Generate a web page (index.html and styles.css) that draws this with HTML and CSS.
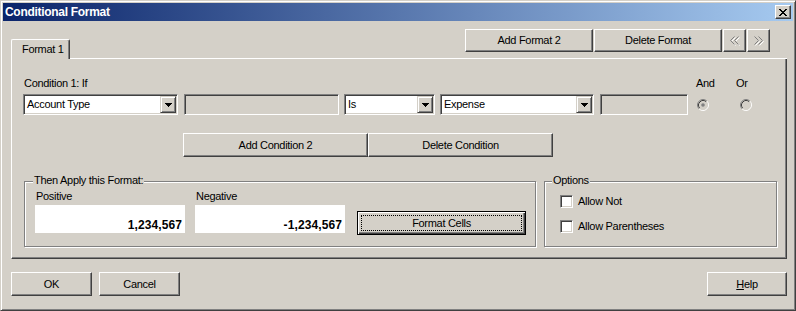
FILE: index.html
```html
<!DOCTYPE html>
<html>
<head>
<meta charset="utf-8">
<title>Conditional Format</title>
<link rel="stylesheet" href="styles.css">
</head>
<body>
<div class="window">
  <div class="titlebar">
    <span class="title">Conditional Format</span>
    <div class="close">
      <svg width="8" height="7" viewBox="0 0 8 7"><path d="M0 0h2v1h1v1h2v-1h1v-1h2v1h-1v1h-1v1h-1v1h1v1h1v1h1v1h-2v-1h-1v-1h-2v1h-1v1h-2v-1h1v-1h1v-1h1v-1h-1v-1h-1v-1h-1z" fill="#000"/></svg>
    </div>
  </div>
  <div class="body">
    <div class="tabhead">
      <div class="tab">Format 1</div>
      <div class="tabline">
        <div class="btn fbtn">Add Format 2</div>
        <div class="btn fbtn">Delete Format</div>
        <div class="btn nav">
          <svg width="10" height="10" viewBox="0 0 10 10"><path d="M4.5 .5L.5 4.5L4.5 8.5M8.5 .5L4.5 4.5L8.5 8.5" transform="translate(1 1)" stroke="#fff" fill="none"/><path d="M4.5 .5L.5 4.5L4.5 8.5M8.5 .5L4.5 4.5L8.5 8.5" stroke="#808080" fill="none"/></svg>
        </div>
        <div class="btn nav">
          <svg width="10" height="10" viewBox="0 0 10 10"><path d="M.5 .5L4.5 4.5L.5 8.5M4.5 .5L8.5 4.5L4.5 8.5" transform="translate(1 1)" stroke="#fff" fill="none"/><path d="M.5 .5L4.5 4.5L.5 8.5M4.5 .5L8.5 4.5L4.5 8.5" stroke="#808080" fill="none"/></svg>
        </div>
      </div>
    </div>
    <div class="panel">
      <div class="labels">
        <span class="l-cond">Condition 1: If</span>
        <span class="l-and">And</span>
        <span class="l-or">Or</span>
      </div>
      <div class="condrow">
        <div class="combo w-acct"><span class="ctext">Account Type</span><span class="carrow"><svg width="7" height="4" viewBox="0 0 7 4"><path d="M0 0H7V1H6V2H5V3H4V4H3V3H2V2H1V1H0Z" fill="#000"/></svg></span></div>
        <div class="textbox w-val1"></div>
        <div class="combo w-is"><span class="ctext">Is</span><span class="carrow"><svg width="7" height="4" viewBox="0 0 7 4"><path d="M0 0H7V1H6V2H5V3H4V4H3V3H2V2H1V1H0Z" fill="#000"/></svg></span></div>
        <div class="combo w-exp"><span class="ctext">Expense</span><span class="carrow"><svg width="7" height="4" viewBox="0 0 7 4"><path d="M0 0H7V1H6V2H5V3H4V4H3V3H2V2H1V1H0Z" fill="#000"/></svg></span></div>
        <div class="textbox w-val2"></div>
        <svg class="radio r-and" width="12" height="12" viewBox="0 0 12 12">
          <circle cx="6" cy="6" r="4.5" fill="#d4d0c8"/>
          <path d="M2.11 9.89A5.5 5.5 0 0 1 9.89 2.11" stroke="#808080" fill="none"/>
          <path d="M9.89 2.11A5.5 5.5 0 0 1 2.11 9.89" stroke="#fff" fill="none"/>
          <path d="M2.82 9.18A4.5 4.5 0 0 1 9.18 2.82" stroke="#404040" fill="none"/>
          <path d="M9.18 2.82A4.5 4.5 0 0 1 2.82 9.18" stroke="#d4d0c8" fill="none"/>
          <circle cx="6" cy="6" r="1.8" fill="#808080"/>
        </svg>
        <svg class="radio r-or" width="12" height="12" viewBox="0 0 12 12">
          <circle cx="6" cy="6" r="4.5" fill="#d4d0c8"/>
          <path d="M2.11 9.89A5.5 5.5 0 0 1 9.89 2.11" stroke="#808080" fill="none"/>
          <path d="M9.89 2.11A5.5 5.5 0 0 1 2.11 9.89" stroke="#fff" fill="none"/>
          <path d="M2.82 9.18A4.5 4.5 0 0 1 9.18 2.82" stroke="#404040" fill="none"/>
          <path d="M9.18 2.82A4.5 4.5 0 0 1 2.82 9.18" stroke="#d4d0c8" fill="none"/>
        </svg>
      </div>
      <div class="condbtns">
        <div class="btn cbtn">Add Condition 2</div>
        <div class="btn cbtn">Delete Condition</div>
      </div>
      <div class="groups">
        <div class="group g-apply">
          <span class="legend">Then Apply this Format:</span>
          <div class="apply">
            <div class="col">
              <span class="vlabel">Positive</span>
              <div class="value">1,234,567</div>
            </div>
            <div class="col col-neg">
              <span class="vlabel">Negative</span>
              <div class="value">-1,234,567</div>
            </div>
            <div class="btn defbtn"><span class="focus">Format Cells</span></div>
          </div>
        </div>
        <div class="group g-opt">
          <span class="legend">Options</span>
          <div class="opts">
            <label class="check"><span class="box"></span>Allow Not</label>
            <label class="check"><span class="box"></span>Allow Parentheses</label>
          </div>
        </div>
      </div>
    </div>
    <div class="footer">
      <div class="btn fbot">OK</div>
      <div class="btn fbot cancel">Cancel</div>
      <div class="btn fbot help"><span><u>H</u>elp</span></div>
    </div>
  </div>
</div>
</body>
</html>
```

FILE: styles.css
```css
* { box-sizing: border-box; }
html, body { margin: 0; padding: 0; }
body {
  background: #d4d0c8;
  font: 11px/13px "Liberation Sans", Arial, sans-serif;
  letter-spacing: -0.3px;
  color: #000;
}
.window {
  width: 796px;
  height: 311px;
  background: #d4d0c8;
  border: 1px solid;
  border-color: #d4d0c8 #404040 #404040 #d4d0c8;
  box-shadow: inset 1px 1px #fff, inset -1px -1px #808080;
  padding: 2px;
  display: flex;
  flex-direction: column;
}
.titlebar {
  height: 18px;
  flex: none;
  display: flex;
  align-items: center;
  padding-left: 2px;
  background: linear-gradient(to right, #0a246a, #a6caf0);
  color: #fff;
}
.title {
  font-weight: bold;
  font-size: 12px;
  line-height: 18px;
  letter-spacing: -0.3px;
}
.close {
  margin-left: auto;
  margin-right: 2px;
  width: 16px;
  height: 14px;
  background: #d4d0c8;
  border: 1px solid;
  border-color: #fff #404040 #404040 #fff;
  box-shadow: inset -1px -1px #808080;
  display: flex;
  align-items: center;
  justify-content: center;
}
.close svg { display: block; margin-left: -1px; }
.body {
  flex: 1;
  padding: 0 6px 0 8px;
  display: flex;
  flex-direction: column;
}
.tabhead {
  height: 38px;
  display: flex;
  flex: none;
}
.tab {
  align-self: flex-end;
  width: 59px;
  height: 20px;
  padding: 3px 0 0 10px;
  border-top: 1px solid #fff;
  border-left: 1px solid #fff;
  border-right: 1px solid #404040;
  border-radius: 2px 2px 0 0;
  box-shadow: inset -1px 0 #808080;
}
.tabline {
  flex: 1;
  border-bottom: 1px solid #fff;
  display: flex;
  justify-content: flex-end;
  align-items: flex-start;
  padding: 8px 17px 0 0;
}
.btn {
  background: #d4d0c8;
  border: 1px solid;
  border-color: #fff #404040 #404040 #fff;
  box-shadow: inset -1px -1px #808080;
  display: flex;
  align-items: center;
  justify-content: center;
  white-space: nowrap;
}
.fbtn { width: 128px; height: 23px; margin-left: 1px; }
.nav { width: 23px; height: 23px; margin-left: 1px; }
.nav svg { display: block; }
.panel {
  height: 200px;
  flex: none;
  border-left: 1px solid #fff;
  border-right: 1px solid #404040;
  border-bottom: 1px solid #404040;
  box-shadow: inset -1px -1px #808080;
  padding-top: 18px;
}
.labels { display: flex; height: 13px; }
.l-cond { width: 684px; padding-left: 12px; }
.l-and { width: 40px; }
.condrow {
  display: flex;
  align-items: center;
  height: 21px;
  margin-top: 4px;
  padding-left: 11px;
}
.combo, .textbox, .box {
  border: 1px solid;
  border-color: #808080 #fff #fff #808080;
  box-shadow: inset 1px 1px #404040, inset -1px -1px #d4d0c8;
}
.combo {
  height: 21px;
  background: #fff;
  display: flex;
  align-items: center;
  padding: 1px;
}
.ctext { flex: 1; padding-left: 2px; }
.carrow {
  width: 16px;
  height: 17px;
  background: #d4d0c8;
  border: 1px solid;
  border-color: #d4d0c8 #404040 #404040 #d4d0c8;
  box-shadow: inset 1px 1px #fff, inset -1px -1px #808080;
  display: flex;
  align-items: center;
  justify-content: center;
}
.carrow svg { display: block; }
.textbox { height: 21px; background: #d4d0c8; }
.w-acct { width: 155px; }
.w-val1 { width: 155px; margin-left: 6px; }
.w-is { width: 91px; margin-left: 5px; }
.w-exp { width: 154px; margin-left: 5px; }
.w-val2 { width: 88px; margin-left: 6px; }
.radio { display: block; flex: none; }
.r-and { margin-left: 9px; }
.r-or { margin-left: 31px; }
.condbtns {
  display: flex;
  margin-top: 18px;
  padding-left: 171px;
}
.cbtn { width: 185px; height: 24px; }
.groups {
  display: flex;
  margin-top: 24px;
  padding-left: 12px;
}
.group {
  position: relative;
  height: 66px;
  border: 1px solid #808080;
  box-shadow: inset 1px 1px #fff, 1px 1px #fff;
}
.g-apply { width: 512px; }
.g-opt { width: 233px; margin-left: 8px; }
.legend {
  position: absolute;
  top: -8px;
  left: 8px;
  padding: 0 1px;
  background: #d4d0c8;
  line-height: 13px;
}
.g-opt .legend { left: 7px; }
.apply {
  display: flex;
  align-items: flex-start;
  padding: 8px 0 0 10px;
}
.col { display: flex; flex-direction: column; width: 150px; }
.col-neg { margin-left: 10px; }
.vlabel { height: 13px; margin-bottom: 2px; padding-left: 1px; }
.value {
  height: 28px;
  background: #fff;
  display: flex;
  align-items: flex-end;
  justify-content: flex-end;
  padding: 0 3px 1px 0;
  font-weight: bold;
  font-size: 12px;
  letter-spacing: 0.1px;
}
.defbtn {
  width: 169px;
  height: 24px;
  margin: 21px 0 0 12px;
  border: 1px solid #000;
  box-shadow: inset 1px 1px #fff, inset -1px -1px #404040, inset -2px -2px #808080;
  padding: 3px;
}
.focus {
  flex: 1;
  align-self: stretch;
  border: 1px dotted #000;
  display: flex;
  align-items: center;
  justify-content: center;
}
.opts {
  display: flex;
  flex-direction: column;
  gap: 12px;
  padding: 13px 0 0 15px;
}
.check { display: flex; align-items: center; height: 13px; }
.box {
  width: 13px;
  height: 13px;
  background: #fff;
  margin-right: 5px;
}
.footer {
  display: flex;
  margin-top: 13px;
}
.fbot { width: 81px; height: 24px; }
.cancel { margin-left: 7px; }
.help { margin-left: auto; width: 80px; }
.help u { text-decoration: underline; }
```
